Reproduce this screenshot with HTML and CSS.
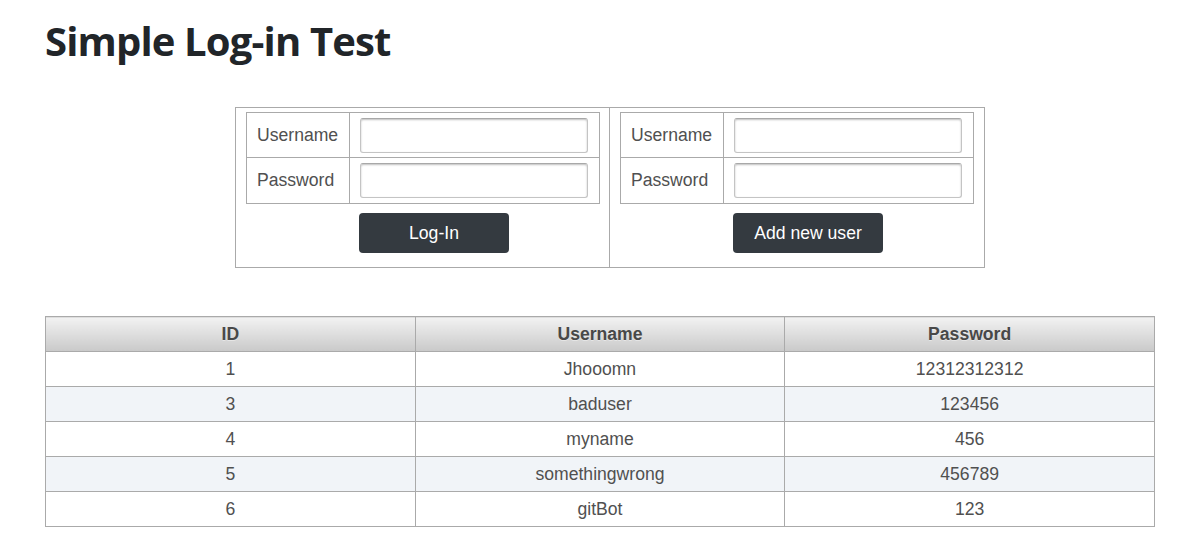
FILE: index.html
```html
<!DOCTYPE html>
<html>
<head>
<meta charset="utf-8">
<title>Simple Log-in Test</title>
<link rel="stylesheet" href="styles.css">
</head>
<body>
<h1 class="title">Simple Log-in Test</h1>
<div class="forms">
  <div class="panel">
    <table class="fields">
      <tr><td class="label">Username</td><td class="field"><input class="input" type="text"></td></tr>
      <tr><td class="label">Password</td><td class="field"><input class="input" type="password"></td></tr>
    </table>
    <button class="btn">Log-In</button>
  </div>
  <div class="panel panel-right">
    <table class="fields">
      <tr><td class="label">Username</td><td class="field"><input class="input" type="text"></td></tr>
      <tr><td class="label">Password</td><td class="field"><input class="input" type="password"></td></tr>
    </table>
    <button class="btn">Add new user</button>
  </div>
</div>
<table class="users">
  <thead>
    <tr><th>ID</th><th>Username</th><th>Password</th></tr>
  </thead>
  <tbody>
    <tr><td>1</td><td>Jhooomn</td><td>12312312312</td></tr>
    <tr class="alt"><td>3</td><td>baduser</td><td>123456</td></tr>
    <tr><td>4</td><td>myname</td><td>456</td></tr>
    <tr class="alt"><td>5</td><td>somethingwrong</td><td>456789</td></tr>
    <tr><td>6</td><td>gitBot</td><td>123</td></tr>
  </tbody>
</table>
</body>
</html>
```

FILE: styles.css
```css
html, body {
  margin: 0;
  padding: 0;
  background: #fff;
}
body {
  padding: 0 24px 0 45px;
  font-family: "Liberation Sans", Arial, sans-serif;
  color: #505050;
}
.title {
  font-family: "Open Sans", "Noto Sans", sans-serif;
  font-weight: 700;
  font-size: 40px;
  line-height: 48px;
  color: #212529;
  margin: 17px 0 0 0;
  letter-spacing: -0.85px;
}
.forms {
  display: grid;
  grid-template-columns: 374px 373px;
  width: 748px;
  margin: 42px 0 0 190px;
  border: 1px solid #aaa;
}
.panel {
  padding: 4px 10px 14px 10px;
  border-right: 1px solid #aaa;
}
.panel-right {
  border-right: none;
}
.fields {
  border-collapse: collapse;
  width: 354px;
}
.fields td {
  border: 1px solid #aaa;
  height: 44px;
  padding: 0;
  vertical-align: middle;
}
.fields tr + tr td {
  height: 45px;
}
.fields .label {
  width: 92px;
  padding-left: 10px;
  text-align: left;
  font-size: 17.6px;
  color: #505050;
}
.fields .field {
  padding-left: 10px;
}
.input {
  display: block;
  box-sizing: border-box;
  width: 228px;
  height: 35px;
  margin: 0;
  border: 1px solid #c4c4c4;
  border-top-color: #a8a8a8;
  border-radius: 3px;
  box-shadow: inset 0 1px 2px rgba(0,0,0,0.25);
  background: #fff;
}
.btn {
  display: block;
  width: 150px;
  height: 40px;
  margin: 9px 0 0 113px;
  border: none;
  border-radius: 4px;
  background: #343a40;
  color: #fff;
  font-family: "Liberation Sans", Arial, sans-serif;
  font-size: 17.6px;
  padding: 0;
}
.users {
  border-collapse: collapse;
  width: 1110px;
  margin-top: 48px;
  table-layout: fixed;
  font-size: 17.6px;
}
.users th, .users td {
  border: 1px solid #aaa;
  height: 34px;
  padding: 0;
  text-align: center;
  vertical-align: middle;
  color: #505050;
}
.users th {
  font-weight: 700;
  color: #484848;
  background: linear-gradient(#f2f2f2, #c9c9c9);
  text-shadow: 0 1px 0 rgba(255,255,255,0.4);
}
.users .alt td {
  background: #f1f4f8;
}
```
